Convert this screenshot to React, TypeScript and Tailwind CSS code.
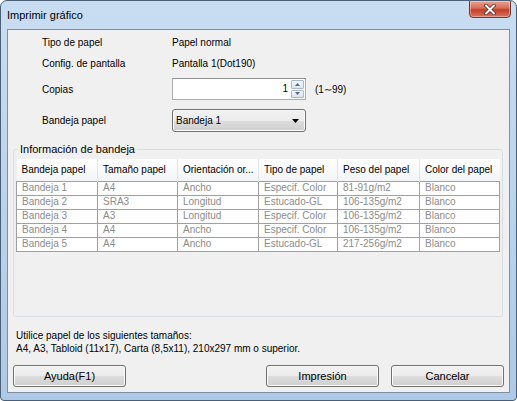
import React from "react";

const headers = [
  "Bandeja papel",
  "Tamaño papel",
  "Orientación or...",
  "Tipo de papel",
  "Peso del papel",
  "Color del papel",
];

const colWidths = ["w-[81px]", "w-[80px]", "w-[81px]", "w-[79px]", "w-[82px]", "w-[80px]"];

const rows = [
  ["Bandeja 1", "A4", "Ancho", "Especif. Color", "81-91g/m2", "Blanco"],
  ["Bandeja 2", "SRA3", "Longitud", "Estucado-GL", "106-135g/m2", "Blanco"],
  ["Bandeja 3", "A3", "Longitud", "Especif. Color", "106-135g/m2", "Blanco"],
  ["Bandeja 4", "A4", "Ancho", "Especif. Color", "106-135g/m2", "Blanco"],
  ["Bandeja 5", "A4", "Ancho", "Estucado-GL", "217-256g/m2", "Blanco"],
];

function WinButton({ label, className = "" }: { label: string; className?: string }) {
  return (
    <button
      className={`h-[22px] w-[113px] rounded-[3px] border border-[#707070] bg-[linear-gradient(#f2f2f2_0%,#ebebeb_50%,#dddddd_51%,#cfcfcf_100%)] text-[11px] text-black shadow-[inset_0_0_0_1px_#fcfcfc] ${className}`}
    >
      {label}
    </button>
  );
}

export default function App() {
  return (
    <div className="w-[517px] h-[401px] overflow-hidden rounded-t-[7px] rounded-b-[4px] border border-[#4b5f77] bg-gradient-to-b from-[#c9ddf2] via-[#bcd3ec] to-[#aec9e6] font-['Liberation_Sans',Arial,sans-serif] text-black">
      {/* title bar */}
      <div className="relative h-[28px] flex items-center pl-[6px] text-[11px]">
        Imprimir gráfico
        <div className="absolute top-[-1px] right-[5px] w-[42px] h-[18px] rounded-b-[4px] border border-[#7b3530] bg-[linear-gradient(#e8a493_0%,#d86b55_45%,#c23f28_55%,#d9735c_100%)] flex items-center justify-center shadow-[inset_0_0_0_1px_rgba(255,255,255,0.35)]">
          <svg width="12" height="11" viewBox="0 0 12 11">
            <path
              d="M2 1.5 L10 9.5 M10 1.5 L2 9.5"
              stroke="#5a2620"
              strokeWidth="3.6"
              strokeLinecap="round"
            />
            <path
              d="M2 1.5 L10 9.5 M10 1.5 L2 9.5"
              stroke="#ffffff"
              strokeWidth="2"
              strokeLinecap="round"
            />
          </svg>
        </div>
      </div>

      {/* client area */}
      <div className="mx-[6px] h-[364px] border border-[#7d8fa4] bg-[#f0f0f0] text-[10px]">
        <div className="pl-[34px] pt-[2px]">
          <div className="h-[20px] flex items-center">
            <span className="w-[130px]">Tipo de papel</span>
            <span>Papel normal</span>
          </div>
          <div className="h-[22px] flex items-center">
            <span className="w-[130px]">Config. de pantalla</span>
            <span>Pantalla 1(Dot190)</span>
          </div>
          <div className="mt-[4px] h-[22px] flex items-center">
            <span className="w-[130px]">Copias</span>
            <div className="w-[134px] h-[22px] flex border border-[#abadb3] border-t-[#8e8f8f] bg-white">
              <span className="flex-1 text-right pr-[3px] leading-[20px]">1</span>
              <div className="w-[14px] flex flex-col gap-[1px] py-[1px] pr-[1px]">
                <div className="flex-1 rounded-[1px] border border-[#a9b8cb] bg-gradient-to-b from-[#f5f8fc] to-[#dbe4ef] flex items-center justify-center">
                  <svg width="5" height="3" viewBox="0 0 5 3">
                    <path d="M0 3 L2.5 0 L5 3 Z" fill="#4a6a9a" />
                  </svg>
                </div>
                <div className="flex-1 rounded-[1px] border border-[#a9b8cb] bg-gradient-to-b from-[#f5f8fc] to-[#dbe4ef] flex items-center justify-center">
                  <svg width="5" height="3" viewBox="0 0 5 3">
                    <path d="M0 0 L5 0 L2.5 3 Z" fill="#4a6a9a" />
                  </svg>
                </div>
              </div>
            </div>
            <span className="ml-[9px]">(1∼99)</span>
          </div>
          <div className="mt-[9px] h-[23px] flex items-center">
            <span className="w-[130px]">Bandeja papel</span>
            <div className="w-[134px] h-[23px] flex items-center justify-between pl-[3px] pr-[6px] rounded-[3px] border border-[#707070] bg-[linear-gradient(#f2f2f2_0%,#ebebeb_50%,#dddddd_51%,#cfcfcf_100%)] shadow-[inset_0_0_0_1px_#fcfcfc]">
              <span>Bandeja 1</span>
              <svg width="7" height="4" viewBox="0 0 7 4">
                <path d="M0 0 L7 0 L3.5 4 Z" fill="#000" />
              </svg>
            </div>
          </div>
        </div>

        {/* group box */}
        <div className="relative mt-[17px] ml-[5px] w-[490px] h-[168px] rounded-[3px] border border-[#d5dfe5] pt-[9px] pl-[2px]">
          <span className="absolute left-[4px] top-[-8px] px-[2px] bg-[#f0f0f0] text-[11px] leading-[14px]">
            Información de bandeja
          </span>
          <table className="table-fixed border-collapse w-[483px]">
            <thead>
              <tr className="h-[22px] bg-gradient-to-b from-white to-[#f3f4f6]">
                {headers.map((h, i) => (
                  <th
                    key={h}
                    className={`${colWidths[i]} p-0 pl-[5px] text-left font-normal whitespace-nowrap overflow-hidden border-r border-[#e2e5e9] last:border-r-0`}
                  >
                    {h}
                  </th>
                ))}
              </tr>
            </thead>
            <tbody>
              {rows.map((r, ri) => (
                <tr key={ri} className="h-[14px] bg-white">
                  {r.map((c, ci) => (
                    <td
                      key={ci}
                      className="p-0 pl-[5px] leading-[12px] text-[#8c8c8c] border border-[#a0a0a0] whitespace-nowrap overflow-hidden"
                    >
                      {c}
                    </td>
                  ))}
                </tr>
              ))}
            </tbody>
          </table>
        </div>

        <div className="mt-[12px] ml-[8px] leading-[13px]">
          <div>Utilice papel de los siguientes tamaños:</div>
          <div>A4, A3, Tabloid (11x17), Carta (8,5x11), 210x297 mm o superior.</div>
        </div>

        <div className="mt-[10px] ml-[5px] flex">
          <WinButton label="Ayuda(F1)" />
          <WinButton label="Impresión" className="ml-[140px]" />
          <WinButton label="Cancelar" className="ml-[12px]" />
        </div>
      </div>
    </div>
  );
}
